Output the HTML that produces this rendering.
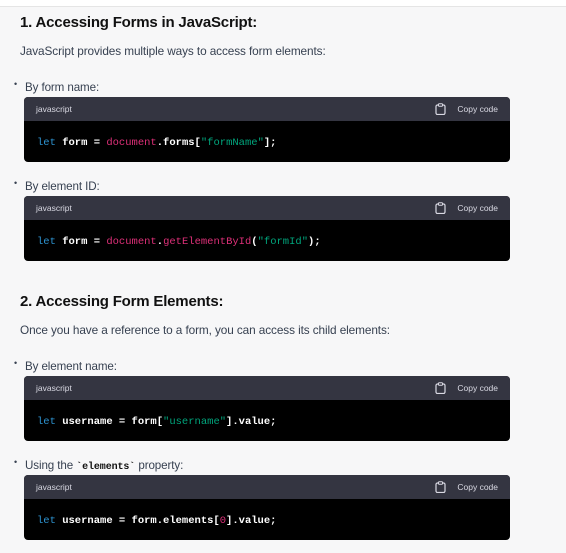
<!DOCTYPE html>
<html><head><meta charset="utf-8"><style>
*{margin:0;padding:0;box-sizing:border-box}
body{width:566px;height:553px;background:#f7f7f8;font-family:"Liberation Sans",sans-serif;color:#374151;position:relative;overflow:hidden}
.top{position:absolute;left:0;top:0;width:566px;height:7px;background:#fff;border-bottom:1px solid #e5e5e5}
.a{position:absolute;white-space:nowrap}
h2{position:absolute;left:20px;font-size:15px;font-weight:bold;color:#111;letter-spacing:-0.2px}
.p{font-size:11.8px;color:#374151;left:20px;letter-spacing:-0.1px}
.b{font-size:11.6px;color:#374151;left:25px;letter-spacing:-0.1px}
.b:before{content:"•";position:absolute;left:-11px;top:-2px;font-size:9px}
.cb{position:absolute;left:24px;width:486px;height:65px;border-radius:4px;overflow:hidden;background:#000}
.hd{height:24px;background:#343541;color:#d9d9e3;font-size:8.5px;position:relative}
.hd .l{position:absolute;left:12px;top:7px}
.hd .r{position:absolute;right:12px;top:7px}
.hd svg{position:absolute;right:64px;top:6px}
.code{position:absolute;left:13px;top:40px;font-family:"Liberation Mono",monospace;font-size:10.5px;font-weight:bold;color:#fff}
.k{color:#2e95d3;font-weight:normal}.r1{color:#df3079;font-weight:normal}.s{color:#00a67d;font-weight:normal}
code{font-family:"Liberation Mono",monospace;font-weight:bold;font-size:10px;color:#111}
</style></head><body>
<div class="top"></div>
<h2 style="top:14px">1. Accessing Forms in JavaScript:</h2>
<div class="a p" style="top:44px">JavaScript provides multiple ways to access form elements:</div>
<div class="a b" style="top:81px">By form name:</div>
<div class="cb" style="top:97px"><div class="hd"><span class="l">javascript</span><svg width="11" height="12" viewBox="0 0 11 12"><rect x="1" y="2" width="9" height="9.5" rx="1.5" fill="none" stroke="#d9d9e3" stroke-width="1.2"/><rect x="3.5" y="0.8" width="4" height="2.4" rx="0.6" fill="#343541" stroke="#d9d9e3" stroke-width="1"/></svg><span class="r">Copy code</span></div>
<div class="code"><span class="k">let</span> form = <span class="r1">document</span>.forms[<span class="s">"formName"</span>];</div></div>
<div class="a b" style="top:180px">By element ID:</div>
<div class="cb" style="top:196px"><div class="hd"><span class="l">javascript</span><svg width="11" height="12" viewBox="0 0 11 12"><rect x="1" y="2" width="9" height="9.5" rx="1.5" fill="none" stroke="#d9d9e3" stroke-width="1.2"/><rect x="3.5" y="0.8" width="4" height="2.4" rx="0.6" fill="#343541" stroke="#d9d9e3" stroke-width="1"/></svg><span class="r">Copy code</span></div>
<div class="code"><span class="k">let</span> form = <span class="r1">document</span>.<span class="r1">getElementById</span>(<span class="s">"formId"</span>);</div></div>
<h2 style="top:293px">2. Accessing Form Elements:</h2>
<div class="a p" style="top:323px">Once you have a reference to a form, you can access its child elements:</div>
<div class="a b" style="top:360px">By element name:</div>
<div class="cb" style="top:376px"><div class="hd"><span class="l">javascript</span><svg width="11" height="12" viewBox="0 0 11 12"><rect x="1" y="2" width="9" height="9.5" rx="1.5" fill="none" stroke="#d9d9e3" stroke-width="1.2"/><rect x="3.5" y="0.8" width="4" height="2.4" rx="0.6" fill="#343541" stroke="#d9d9e3" stroke-width="1"/></svg><span class="r">Copy code</span></div>
<div class="code"><span class="k">let</span> username = form[<span class="s">"username"</span>].value;</div></div>
<div class="a b" style="top:459px">Using the <code>`elements`</code> property:</div>
<div class="cb" style="top:475px"><div class="hd"><span class="l">javascript</span><svg width="11" height="12" viewBox="0 0 11 12"><rect x="1" y="2" width="9" height="9.5" rx="1.5" fill="none" stroke="#d9d9e3" stroke-width="1.2"/><rect x="3.5" y="0.8" width="4" height="2.4" rx="0.6" fill="#343541" stroke="#d9d9e3" stroke-width="1"/></svg><span class="r">Copy code</span></div>
<div class="code"><span class="k">let</span> username = form.elements[<span class="r1">0</span>].value;</div></div>
</body></html>
